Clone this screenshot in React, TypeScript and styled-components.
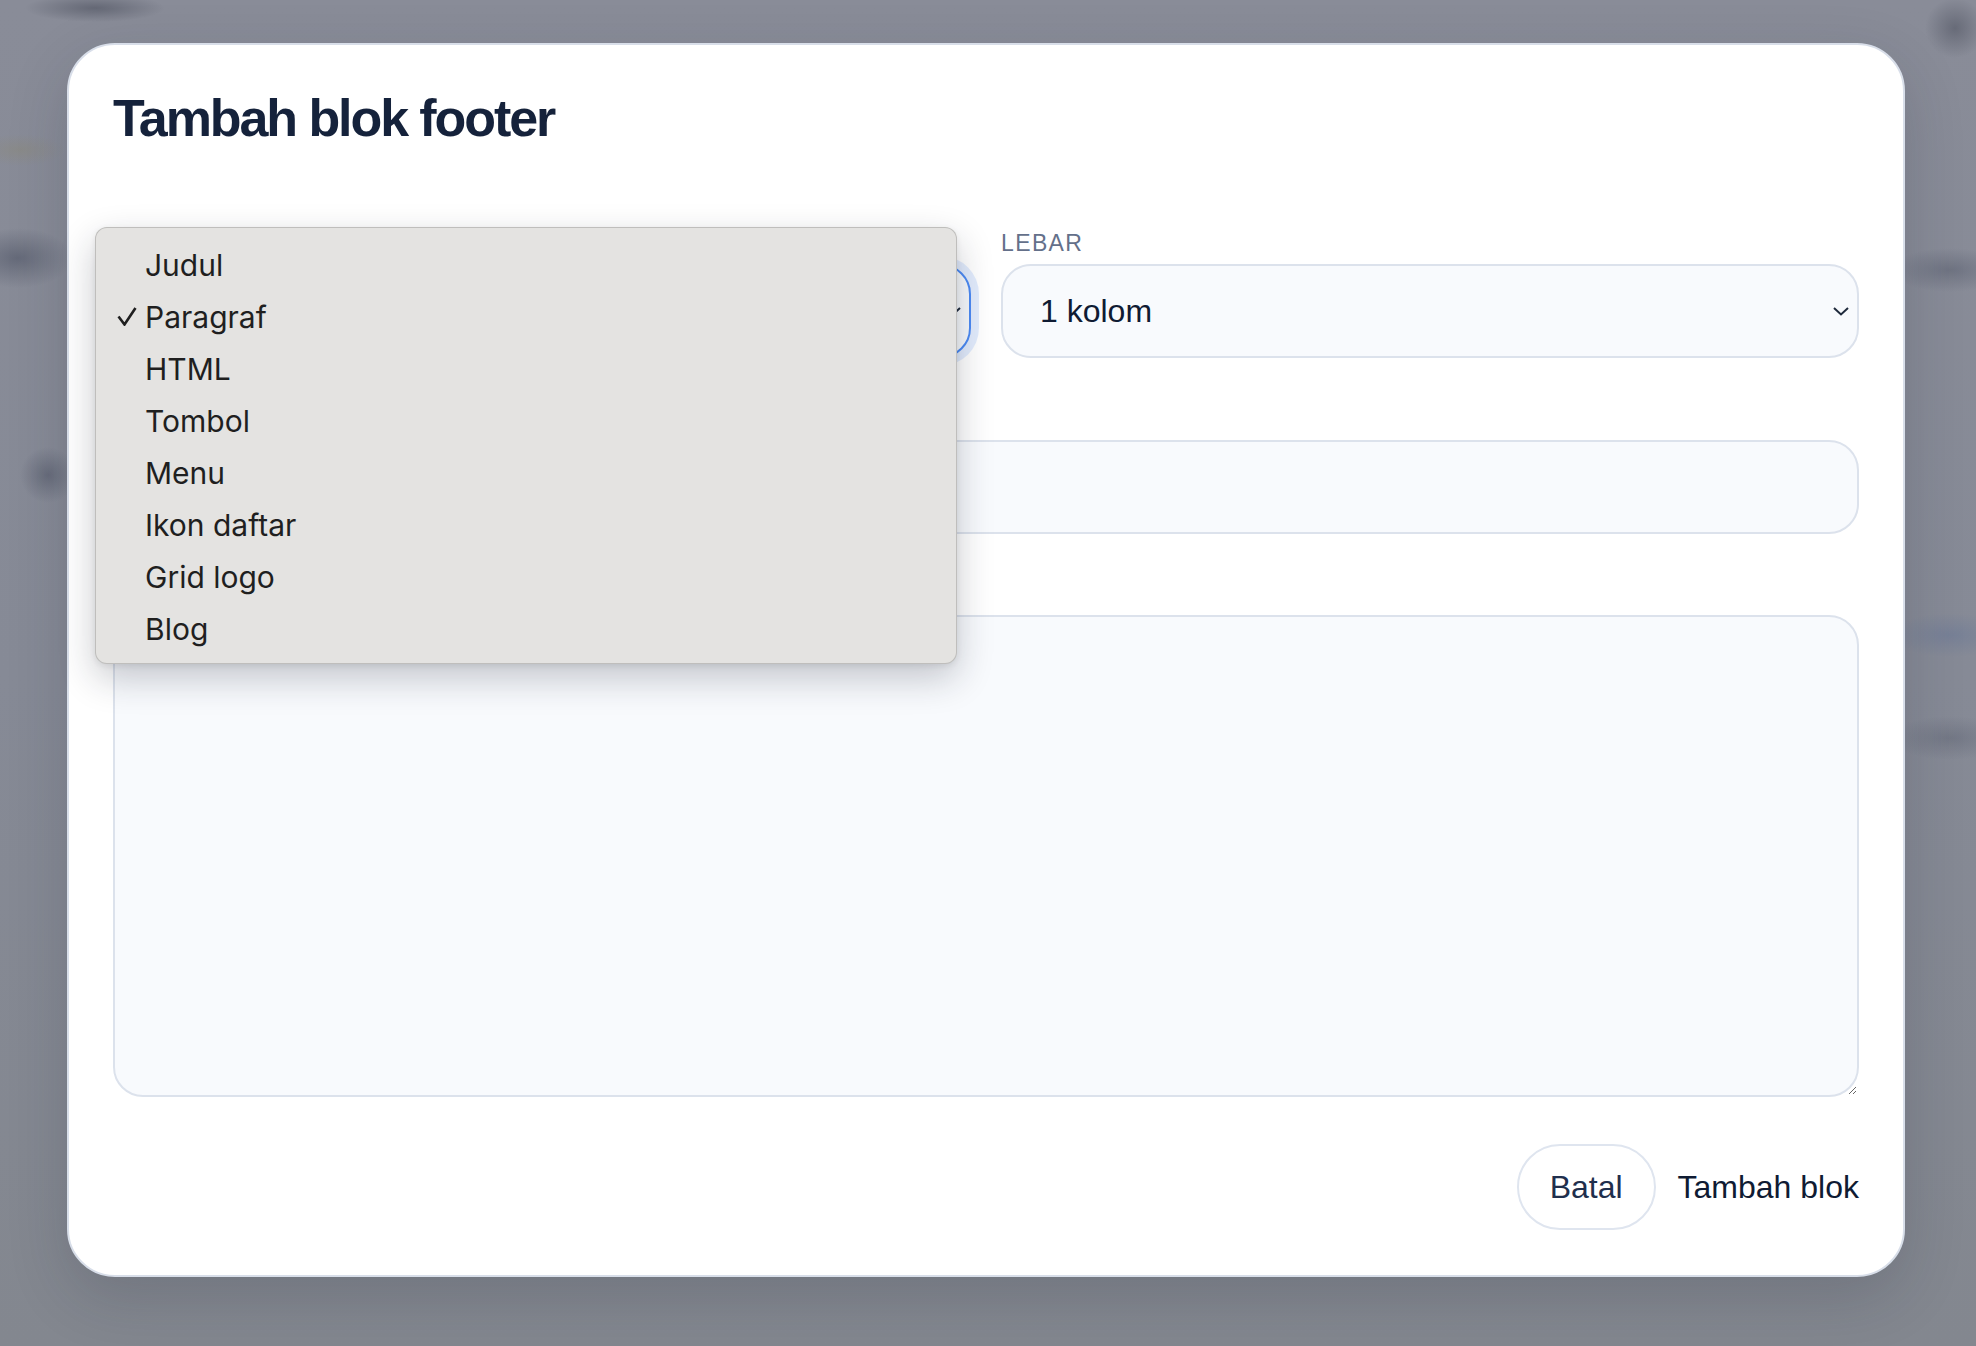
import React from "react";
import styled, { createGlobalStyle, css } from "styled-components";

const GlobalStyle = createGlobalStyle`
  html, body {
    margin: 0;
    padding: 0;
  }
  body {
    background: #868a96;
    font-family: "Liberation Sans", Arial, sans-serif;
  }
  * {
    box-sizing: border-box;
  }
`;

// blurred page behind the overlay, painted as soft blobs
const Backdrop = styled.div`
  min-height: 100vh;
  display: flex;
  align-items: flex-start;
  padding: 43px 71px 69px 67px;
  background:
    radial-gradient(70px 14px at 95px 8px, rgba(70, 74, 88, 0.55), transparent),
    radial-gradient(45px 16px at 20px 150px, rgba(140, 135, 110, 0.35), transparent),
    radial-gradient(55px 30px at 18px 258px, rgba(72, 78, 96, 0.55), transparent),
    radial-gradient(28px 28px at 48px 475px, rgba(72, 78, 96, 0.5), transparent),
    radial-gradient(30px 30px at 1955px 28px, rgba(70, 74, 88, 0.5), transparent),
    radial-gradient(60px 22px at 1950px 270px, rgba(80, 86, 104, 0.45), transparent),
    radial-gradient(60px 22px at 1950px 635px, rgba(90, 110, 150, 0.35), transparent),
    radial-gradient(60px 22px at 1950px 738px, rgba(80, 86, 104, 0.35), transparent),
    linear-gradient(180deg, #898c98 0%, #868a96 50%, #83878f 100%);
`;

const Modal = styled.div`
  flex: 1;
  height: 1234px;
  background: #ffffff;
  border: 2px solid #d8dee9;
  border-radius: 48px;
  padding: 42px 44px 44px;
  display: flex;
  flex-direction: column;
  box-shadow: 0 20px 60px rgba(30, 36, 52, 0.18);
`;

const Title = styled.h2`
  margin: 0;
  font-family: "Liberation Sans", Arial, sans-serif;
  font-size: 52px;
  line-height: 1.2;
  font-weight: 700;
  letter-spacing: -0.04em;
  color: #15223b;
`;

const Form = styled.div`
  margin-top: 81px;
  display: flex;
  flex-direction: column;
  gap: 48px;
`;

const Row = styled.div`
  display: grid;
  grid-template-columns: 1fr 1fr;
  gap: 30px;
`;

const Field = styled.div`
  display: flex;
  flex-direction: column;
  gap: 6px;
`;

const Label = styled.label`
  font-size: 23px;
  line-height: 1.2;
  letter-spacing: 0.06em;
  text-transform: uppercase;
  color: #64708a;
`;

const controlBase = css`
  width: 100%;
  background: #f8fafd;
  border: 2px solid #dce2ec;
  font-family: "Liberation Sans", Arial, sans-serif;
  font-size: 32px;
  color: #0f1b33;
  outline: none;
`;

const SelectWrap = styled.div`
  position: relative;
`;

const SelectBox = styled.div<{ $focused?: boolean }>`
  ${controlBase};
  height: 94px;
  border-radius: 30px;
  display: flex;
  align-items: center;
  justify-content: space-between;
  padding: 2px 8px 0 37px;
  ${p =>
    p.$focused &&
    css`
      border-color: #4c8bf5;
      box-shadow: 0 0 0 8px rgba(76, 139, 245, 0.16);
    `}
`;

const TextInput = styled.input`
  ${controlBase};
  height: 94px;
  border-radius: 30px;
  padding: 0 37px;
`;

const TextArea = styled.textarea`
  ${controlBase};
  height: 482px;
  border-radius: 30px;
  padding: 26px 37px;
  resize: vertical;
  display: block;
`;

const Chevron = styled.svg`
  width: 16px;
  height: 9px;
  flex-shrink: 0;
`;

const Popup = styled.div`
  position: absolute;
  left: -18px;
  top: -37px;
  width: 862px;
  z-index: 10;
  background: #e4e3e1;
  border: 1px solid rgba(0, 0, 0, 0.16);
  border-radius: 12px;
  padding: 11px 0 8px;
  box-shadow: 0 14px 36px rgba(25, 30, 45, 0.24), 0 2px 6px rgba(0, 0, 0, 0.08);
`;

const Option = styled.div`
  height: 52px;
  display: flex;
  align-items: center;
  padding-left: 21px;
  font-family: Inter, "Liberation Sans", sans-serif;
  font-size: 30px;
  color: #1f1f1f;
`;

const CheckSlot = styled.span`
  width: 28px;
  display: inline-flex;
  align-items: center;
`;

const Footer = styled.div`
  margin-top: 47px;
  display: flex;
  justify-content: flex-end;
  align-items: center;
  gap: 22px;
`;

const Button = styled.button<{ $variant?: "ghost" | "plain" }>`
  font-family: "Liberation Sans", Arial, sans-serif;
  font-size: 32px;
  cursor: pointer;
  ${p =>
    p.$variant === "ghost"
      ? css`
          height: 86px;
          padding: 0 31px;
          border-radius: 999px;
          border: 2px solid #dfe5ef;
          background: #ffffff;
          color: #1f2f4d;
        `
      : css`
          padding: 0;
          border: none;
          background: none;
          color: #0f1b33;
        `}
`;

const options = ["Judul", "Paragraf", "HTML", "Tombol", "Menu", "Ikon daftar", "Grid logo", "Blog"];

const ChevronIcon = () => (
  <Chevron viewBox="0 0 16 9" fill="none">
    <path d="M1 1l7 6.5L15 1" stroke="#1f2a3c" strokeWidth="2" />
  </Chevron>
);

export default function App() {
  const selected = "Paragraf";
  return (
    <>
      <GlobalStyle />
      <Backdrop>
        <Modal>
          <Title>Tambah blok footer</Title>
          <Form>
            <Row>
              <Field>
                <Label>Jenis</Label>
                <SelectWrap>
                  <SelectBox $focused>
                    {selected}
                    <ChevronIcon />
                  </SelectBox>
                  <Popup>
                    {options.map(o => (
                      <Option key={o}>
                        <CheckSlot>
                          {o === selected && (
                            <svg width="20" height="19" viewBox="0 0 20 19" fill="none">
                              <path d="M1.5 9.5L7.5 17.5L18.5 1" stroke="#1f1f1f" strokeWidth="2.6" />
                            </svg>
                          )}
                        </CheckSlot>
                        {o}
                      </Option>
                    ))}
                  </Popup>
                </SelectWrap>
              </Field>
              <Field>
                <Label>Lebar</Label>
                <SelectBox>
                  1 kolom
                  <ChevronIcon />
                </SelectBox>
              </Field>
            </Row>
            <Field>
              <Label>Judul</Label>
              <TextInput />
            </Field>
            <Field>
              <Label>Konten</Label>
              <TextArea />
            </Field>
          </Form>
          <Footer>
            <Button $variant="ghost">Batal</Button>
            <Button $variant="plain">Tambah blok</Button>
          </Footer>
        </Modal>
      </Backdrop>
    </>
  );
}
